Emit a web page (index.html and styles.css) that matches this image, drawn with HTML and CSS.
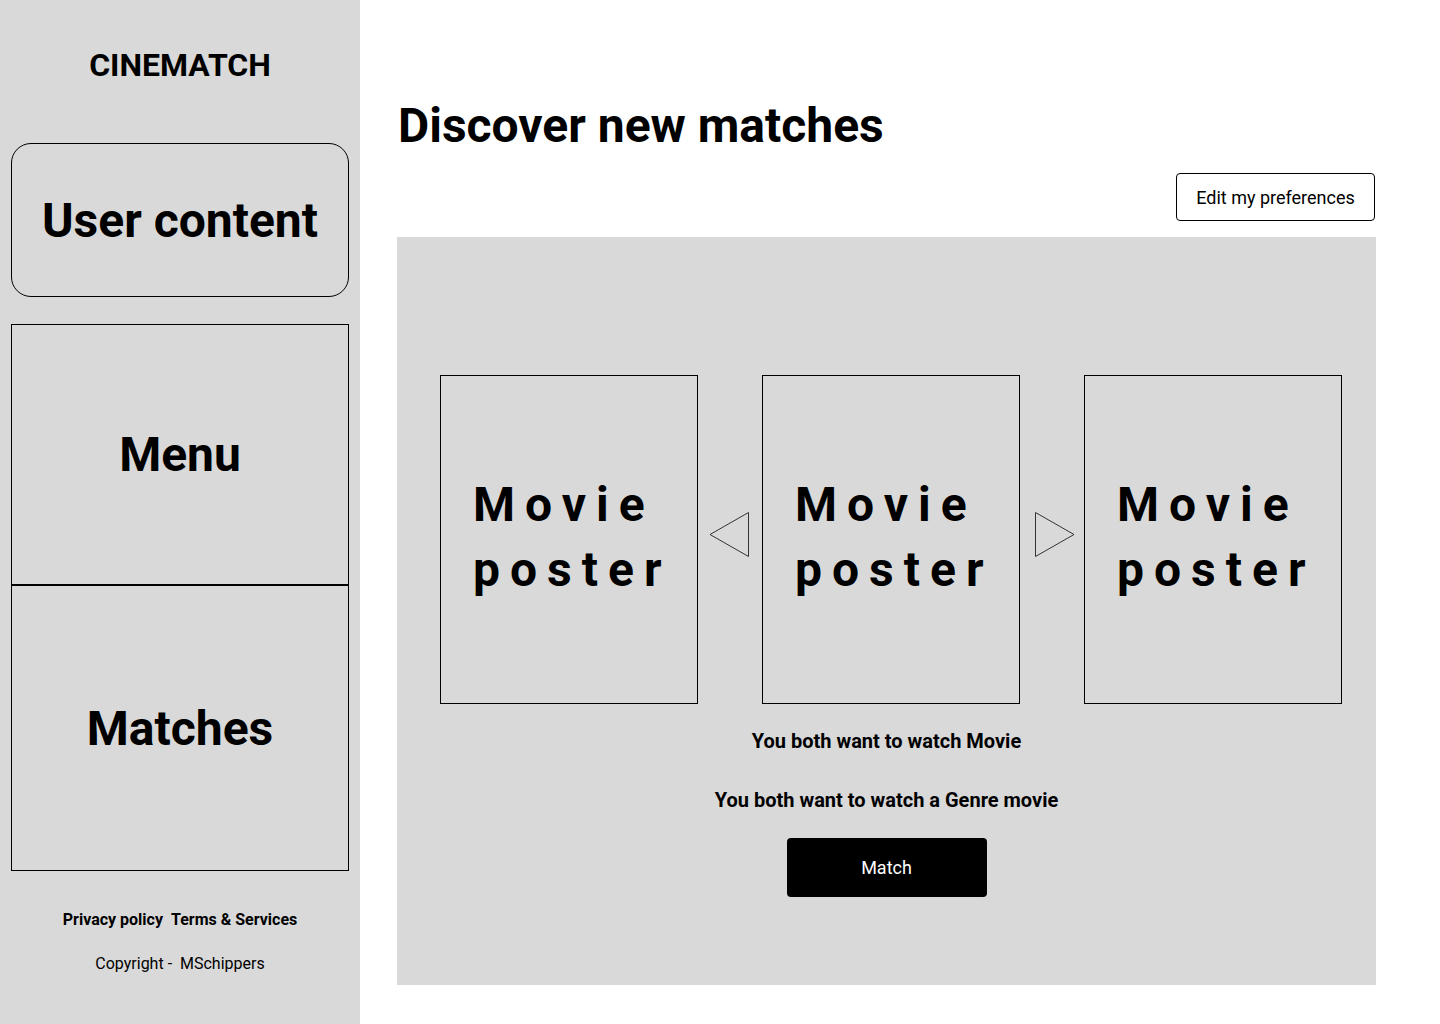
FILE: index.html
```html
<!DOCTYPE html>
<html lang="en">
<head>
<meta charset="utf-8">
<title>Cinematch</title>
<link rel="stylesheet" href="styles.css">
</head>
<body>
<div class="app">
  <aside class="sidebar">
    <div class="logo">CINEMATCH</div>
    <div class="user-box">User content</div>
    <div class="nav-box menu">Menu</div>
    <div class="nav-box matches">Matches</div>
    <div class="footer">
      <div class="links"><span>Privacy policy</span><span>Terms &amp; Services</span></div>
      <div class="copy">Copyright -&nbsp; MSchippers</div>
    </div>
  </aside>
  <main class="main">
    <h1 class="title">Discover new matches</h1>
    <div class="toolbar">
      <button class="btn-outline">Edit my preferences</button>
    </div>
    <section class="panel">
      <div class="carousel">
        <div class="poster"><span>Movie poster</span></div>
        <svg class="arrow arrow-left" width="41" height="46" viewBox="0 0 41 46"><polygon points="1,22.5 39.5,0.5 39.5,44.5" fill="none" stroke="#333" stroke-width="1"/></svg>
        <div class="poster"><span>Movie poster</span></div>
        <svg class="arrow arrow-right" width="41" height="46" viewBox="0 0 41 46"><polygon points="1.5,0.5 40,22.5 1.5,44.5" fill="none" stroke="#333" stroke-width="1"/></svg>
        <div class="poster"><span>Movie poster</span></div>
      </div>
      <p class="info first">You both want to watch Movie</p>
      <p class="info second">You both want to watch a Genre movie</p>
      <button class="btn-match">Match</button>
    </section>
  </main>
</div>
</body>
</html>
```
FILE: styles.css
```css
* { box-sizing: border-box; }
html, body { margin: 0; padding: 0; }
body {
  font-family: Roboto, "Liberation Sans", sans-serif;
  color: #000;
  background: #fff;
}
.app {
  display: flex;
  width: 1440px;
  height: 1024px;
}
.sidebar {
  width: 360px;
  flex: none;
  background: #d9d9d9;
  padding: 46px 11px 0 11px;
  display: flex;
  flex-direction: column;
}
.logo {
  text-align: center;
  font-size: 32px;
  font-weight: 700;
  line-height: 38px;
}
.user-box {
  margin-top: 59px;
  height: 154px;
  border: 1px solid #000;
  border-radius: 20px;
  display: flex;
  align-items: center;
  justify-content: center;
  font-size: 48px;
  font-weight: 700;
}
.nav-box {
  border: 1px solid #000;
  display: flex;
  align-items: center;
  justify-content: center;
  font-size: 48px;
  font-weight: 700;
}
.menu {
  margin-top: 27px;
  height: 261px;
}
.matches {
  height: 286px;
}
.footer {
  margin-top: 39px;
  text-align: center;
  font-size: 16px;
}
.links {
  font-weight: 700;
  line-height: 20px;
  display: flex;
  justify-content: center;
  gap: 8px;
}
.copy {
  margin-top: 24px;
  line-height: 20px;
}
.main {
  flex: 1;
  padding: 0 64px 0 37px;
  display: flex;
  flex-direction: column;
}
.title {
  margin: 98px 0 0 1px;
  font-size: 48px;
  font-weight: 700;
  line-height: 56px;
}
.toolbar {
  display: flex;
  justify-content: flex-end;
  margin-top: 19px;
  padding-right: 1px;
}
.btn-outline {
  width: 199px;
  height: 48px;
  background: #fff;
  border: 1px solid #000;
  border-radius: 4px;
  font-family: Roboto, "Liberation Sans", sans-serif;
  font-size: 18px;
  color: #000;
  padding: 0;
}
.panel {
  margin-top: 16px;
  height: 748px;
  background: #d9d9d9;
  padding-top: 138px;
  display: flex;
  flex-direction: column;
  align-items: center;
}
.carousel {
  align-self: flex-start;
  margin-left: 43px;
  display: flex;
  align-items: flex-start;
}
.poster {
  width: 258px;
  height: 329px;
  border: 1px solid #000;
  display: flex;
  align-items: center;
  padding: 0 18px 6px 32px;
  font-size: 48px;
  font-weight: 700;
  letter-spacing: 10px;
  line-height: 65px;
}
.arrow {
  flex: none;
  margin-top: 137px;
}
.arrow-left { margin-left: 11px; margin-right: 12px; }
.arrow-right { margin-left: 14px; margin-right: 9px; }
.info {
  margin: 0;
  font-size: 20px;
  font-weight: 700;
  line-height: 23px;
}
.info.first { margin-top: 26px; }
.info.second { margin-top: 36px; }
.btn-match {
  margin-top: 26px;
  width: 200px;
  height: 59px;
  background: #000;
  color: #fff;
  border: none;
  border-radius: 4px;
  font-family: Roboto, "Liberation Sans", sans-serif;
  font-size: 18px;
  padding: 0;
}
```
